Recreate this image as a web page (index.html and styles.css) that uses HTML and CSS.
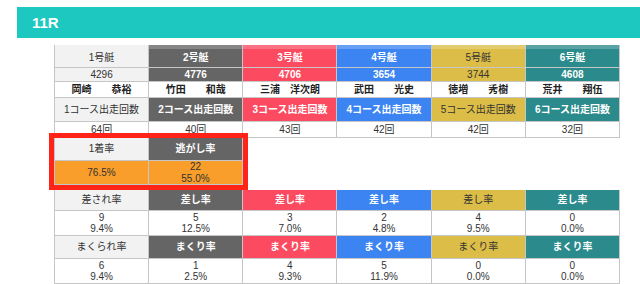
FILE: index.html
```html
<!DOCTYPE html>
<html lang="ja">
<head>
<meta charset="utf-8">
<link rel="stylesheet" href="styles.css">
</head>
<body>
<div class="race-bar">11R</div>

<div class="tbl six t1">
  <div class="c hd w1 band">1号艇</div>
  <div class="c hd w2 band">2号艇</div>
  <div class="c hd w3 band">3号艇</div>
  <div class="c hd w4 band">4号艇</div>
  <div class="c hd w5 band">5号艇</div>
  <div class="c hd w6 band">6号艇</div>

  <div class="c num w1">4296</div>
  <div class="c num w2">4776</div>
  <div class="c num w3">4706</div>
  <div class="c num w4">3654</div>
  <div class="c num w5">3744</div>
  <div class="c num w6">4608</div>

  <div class="c name">岡崎　　恭裕</div>
  <div class="c name">竹田　　和哉</div>
  <div class="c name">三浦　洋次朗</div>
  <div class="c name">武田　　光史</div>
  <div class="c name">徳増　　秀樹</div>
  <div class="c name">荒井　　翔伍</div>

  <div class="c hd2 w1">1コース出走回数</div>
  <div class="c hd2 w2">2コース出走回数</div>
  <div class="c hd2 w3">3コース出走回数</div>
  <div class="c hd2 w4">4コース出走回数</div>
  <div class="c hd2 w5">5コース出走回数</div>
  <div class="c hd2 w6">6コース出走回数</div>

  <div class="c val1">64回</div>
  <div class="c val1">40回</div>
  <div class="c val1">43回</div>
  <div class="c val1">42回</div>
  <div class="c val1">42回</div>
  <div class="c val1">32回</div>
</div>

<div class="tbl two t2">
  <div class="c hd3 w1">1着率</div>
  <div class="c hd3 w2">逃がし率</div>
  <div class="c orange">76.5%</div>
  <div class="c orange">22<br>55.0%</div>
</div>

<div class="tbl six t3">
  <div class="c hd4 w1">差され率</div>
  <div class="c hd4 w2">差し率</div>
  <div class="c hd4 w3">差し率</div>
  <div class="c hd4 w4">差し率</div>
  <div class="c hd4 w5">差し率</div>
  <div class="c hd4 w6">差し率</div>

  <div class="c val2">9<br>9.4%</div>
  <div class="c val2">5<br>12.5%</div>
  <div class="c val2">3<br>7.0%</div>
  <div class="c val2">2<br>4.8%</div>
  <div class="c val2">4<br>9.5%</div>
  <div class="c val2">0<br>0.0%</div>

  <div class="c hd5 w1">まくられ率</div>
  <div class="c hd5 w2">まくり率</div>
  <div class="c hd5 w3">まくり率</div>
  <div class="c hd5 w4">まくり率</div>
  <div class="c hd5 w5">まくり率</div>
  <div class="c hd5 w6">まくり率</div>

  <div class="c val2">6<br>9.4%</div>
  <div class="c val2">1<br>2.5%</div>
  <div class="c val2">4<br>9.3%</div>
  <div class="c val2">5<br>11.9%</div>
  <div class="c val2">0<br>0.0%</div>
  <div class="c val2">0<br>0.0%</div>
</div>
</body>
</html>
```
FILE: styles.css
```css
html, body {
  margin: 0;
  padding: 0;
  background: #ffffff;
}
body {
  font-family: "Liberation Sans", "Noto Sans CJK JP", sans-serif;
  font-size: 10px;
  color: #333333;
  padding-top: 7px;
  overflow: hidden;
}
.race-bar {
  margin-left: 17px;
  height: 31px;
  background: #1dc8c0;
  color: #ffffff;
  font-weight: bold;
  font-size: 15px;
  line-height: 31px;
  padding-left: 15px;
}
.tbl {
  display: grid;
  gap: 1px;
  background: #c6c6c6;
  padding: 0 1px 1px 1px;
  margin-left: 54px;
}
.six {
  width: 564px;
  grid-template-columns: repeat(6, 1fr);
}
.two {
  width: 187px;
  grid-template-columns: repeat(2, 1fr);
}
.t1 {
  margin-top: 7px;
  grid-template-rows: 22px 13px 15px 23px 15px;
}
.t2 {
  grid-template-rows: 22px 23px;
  outline: 5px solid #ff2417;
  position: relative;
  z-index: 2;
}
.t3 {
  margin-top: 5px;
  grid-template-rows: 20px 24px 22px 24px;
}
.c {
  display: flex;
  align-items: center;
  justify-content: center;
  text-align: center;
  background: #ffffff;
  line-height: 12px;
  white-space: nowrap;
}
.w1 { background: #f2f2f2; color: #333333; }
.w2 { background: #656565; color: #ffffff; font-weight: bold; }
.w3 { background: #fc4a60; color: #ffffff; font-weight: bold; }
.w4 { background: #3b84f1; color: #ffffff; font-weight: bold; }
.w5 { background: #dcbd47; color: #333333; }
.w6 { background: #2b8a8b; color: #ffffff; font-weight: bold; }
.band {
  padding-top: 3px;
  box-shadow: inset 0 4px 0 rgba(255, 255, 255, 0.22);
}
.w1.band { box-shadow: none; }
.num { font-size: 10px; }
.name {
  font-weight: bold;
  color: #222222;
}
.val1, .val2 { color: #333333; }
.val2 { line-height: 11.5px; }
.orange {
  background: #f99e2a;
  color: #333333;
  line-height: 11.5px;
}
```
